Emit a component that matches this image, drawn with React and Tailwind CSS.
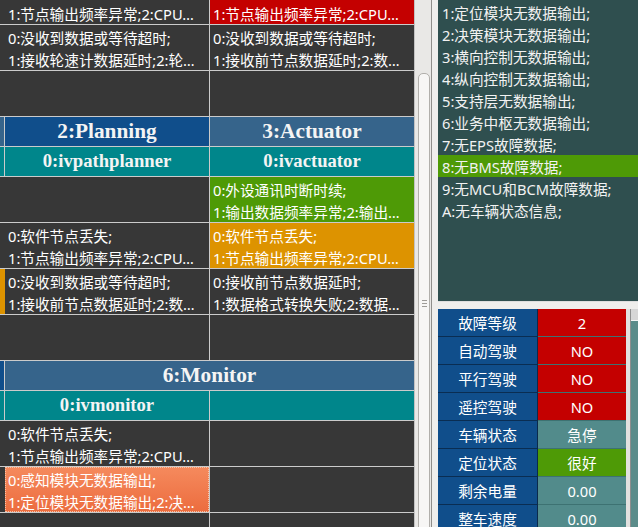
const DARK = 'bg-[#373737]';
const RED = 'bg-[#c40000]';
const GREEN = 'bg-[#4e9a06]';
const AMBER = 'bg-[#dd9300]';
const CORAL =
  'bg-linear-to-b from-[#f58a5d] to-[#ec6c3e] outline-1 outline-dotted -outline-offset-1 outline-[#f9c4a8]';
const STEEL = 'bg-[#36648b]';
const DODGER = 'bg-[#104e8b]';
const TEAL = 'bg-[#00868b]';

const NODE_LOST = ['0:软件节点丢失;', '1:节点输出频率异常;2:CPU…'];
// first row is scrolled half out of view, only its second line shows
const NODE_LOST_TAIL = ['', '1:节点输出频率异常;2:CPU…'];

// table rows, left strip + two node columns
const rows = [
  {
    cells: [
      { bg: DARK },
      { bg: DARK, lines: NODE_LOST_TAIL },
      { bg: RED, lines: NODE_LOST_TAIL },
    ],
  },
  {
    cells: [
      { bg: DARK },
      { bg: DARK, lines: ['0:没收到数据或等待超时;', '1:接收轮速计数据延时;2:轮…'] },
      { bg: DARK, lines: ['0:没收到数据或等待超时;', '1:接收前节点数据延时;2:数…'] },
    ],
  },
  { cells: [{ bg: DARK }, { bg: DARK }, { bg: DARK }] },
  {
    head: true,
    cells: [
      { bg: STEEL },
      { bg: DODGER, title: '2:Planning' },
      { bg: STEEL, title: '3:Actuator' },
    ],
  },
  {
    head: true,
    cells: [
      { bg: TEAL },
      { bg: TEAL, sub: '0:ivpathplanner' },
      { bg: TEAL, sub: '0:ivactuator' },
    ],
  },
  {
    cells: [
      { bg: DARK },
      { bg: DARK },
      { bg: GREEN, lines: ['0:外设通讯时断时续;', '1:输出数据频率异常;2:输出…'] },
    ],
  },
  {
    cells: [
      { bg: DARK },
      { bg: DARK, lines: NODE_LOST },
      { bg: AMBER, lines: NODE_LOST },
    ],
  },
  {
    cells: [
      { bg: AMBER },
      { bg: DARK, lines: ['0:没收到数据或等待超时;', '1:接收前节点数据延时;2:数…'] },
      { bg: DARK, lines: ['0:接收前节点数据延时;', '1:数据格式转换失败;2:数据…'] },
    ],
  },
  { cells: [{ bg: DARK }, { bg: DARK }, { bg: DARK }] },
  {
    head: true,
    cells: [{ bg: DODGER }, { bg: STEEL, title: '6:Monitor', span: true }],
  },
  {
    head: true,
    cells: [{ bg: TEAL }, { bg: TEAL, sub: '0:ivmonitor' }, { bg: TEAL }],
  },
  {
    cells: [{ bg: DARK }, { bg: DARK, lines: NODE_LOST }, { bg: DARK }],
  },
  {
    cells: [
      { bg: DARK },
      { bg: CORAL, lines: ['0:感知模块无数据输出;', '1:定位模块无数据输出;2:决…'] },
      { bg: DARK },
    ],
  },
  { cells: [{ bg: DARK }, { bg: DARK }, { bg: DARK }] },
];

// item 0 is scrolled out above the list's top edge
const faults = [
  '1:定位模块无数据输出;',
  '2:决策模块无数据输出;',
  '3:横向控制无数据输出;',
  '4:纵向控制无数据输出;',
  '5:支持层无数据输出;',
  '6:业务中枢无数据输出;',
  '7:无EPS故障数据;',
  '8:无BMS故障数据;',
  '9:无MCU和BCM故障数据;',
  'A:无车辆状态信息;',
];

const status = [
  ['故障等级', '2', 'bg-[#c40000]'],
  ['自动驾驶', 'NO', 'bg-[#c40000]'],
  ['平行驾驶', 'NO', 'bg-[#c40000]'],
  ['遥控驾驶', 'NO', 'bg-[#c40000]'],
  ['车辆状态', '急停', 'bg-[#528b8b]'],
  ['定位状态', '很好', 'bg-[#4e9a06]'],
  ['剩余电量', '0.00', 'bg-[#528b8b]'],
  ['整车速度', '0.00', 'bg-[#528b8b]'],
];

function Cell({ cell, head }) {
  const span = cell.span ? 'col-span-2' : '';
  if (head) {
    return (
      <div
        className={`${cell.bg} ${span} h-[29px] flex items-center justify-center font-['Liberation_Serif',serif] font-bold text-[#f4f4f4] whitespace-nowrap`}
      >
        {cell.title && <span className="text-[21.33px] leading-none">{cell.title}</span>}
        {cell.sub && <span className="text-[18.67px] leading-none">{cell.sub}</span>}
      </div>
    );
  }
  return (
    <div
      className={`${cell.bg} ${span} h-[45px] px-[3px] pt-[2px] overflow-hidden whitespace-nowrap text-white leading-[22px]`}
    >
      {cell.lines &&
        cell.lines.map((l, i) => (
          <div key={i} className="h-[22px]">
            {l}
          </div>
        ))}
    </div>
  );
}

export default function App() {
  return (
    <div className="w-[638px] h-[527px] overflow-hidden flex bg-[#efeeec] font-['Noto_Sans','Noto_Sans_CJK_SC',sans-serif] text-[14.67px]">
      {/* node table */}
      <div className="w-[414px] shrink-0 h-full overflow-hidden">
        <div className="-mt-[21px] grid grid-cols-[4px_204px_204px] gap-px bg-[#cbcbcb]">
          {rows.map((row, r) =>
            row.cells.map((cell, c) => (
              <Cell key={`${r}-${c}`} cell={cell} head={row.head} />
            ))
          )}
        </div>
      </div>

      {/* scrollbar */}
      <div className="w-[17px] shrink-0 h-full border-l border-[#c2c2c2] bg-[#e9e8e6] pt-[73px]">
        <div className="ml-[3px] w-[12px] h-[500px] bg-[#f7f6f5] border border-[#b1afab] rounded-t-[5px] flex flex-col items-center pt-[226px] gap-[2px]">
          <div className="w-[5px] h-px bg-[#9e9c98]" />
          <div className="w-[5px] h-px bg-[#9e9c98]" />
          <div className="w-[5px] h-px bg-[#9e9c98]" />
        </div>
      </div>

      {/* right panel */}
      <div className="flex-1 h-full border-l border-[#8f8e8b] pl-[6px] flex flex-col">
        <div className="h-[302px] shrink-0 bg-[#2f4f4f] overflow-hidden border-b border-[#dedede] pt-px">
          {faults.map((f, i) => (
            <div
              key={f}
              className={`h-[22px] pl-[4px] leading-[24px] whitespace-nowrap text-[#f2f2f2] ${i === 7 ? 'bg-[#4e9a06]' : ''}`}
            >
              {f}
            </div>
          ))}
        </div>

        <div className="mt-[7px] flex-1 flex">
          <div className="flex flex-col">
            {status.map(([label, value, bg]) => (
              <div key={label} className="h-[28px] shrink-0 flex">
                <div className="w-[99px] h-full bg-[#104e8b] border-b border-[#0a2d52] flex items-center justify-center text-white">
                  {label}
                </div>
                <div className="w-px h-full bg-[#0b2a4b]" />
                <div
                  className={`w-[88px] h-full ${bg} border-b border-[#3d7272] flex items-center justify-center text-white`}
                >
                  {value}
                </div>
              </div>
            ))}
          </div>
          <div className="w-[4px] bg-[#e2e1df]" />
          <div className="flex-1 border-l border-[#8e8e8e] flex flex-col">
            <div className="h-[11px] bg-[#d6d6d6]" />
            <div className="h-px bg-[#f4f4f4]" />
            <div className="flex-1 bg-[#5b8c8a]" />
          </div>
        </div>
      </div>
    </div>
  );
}
